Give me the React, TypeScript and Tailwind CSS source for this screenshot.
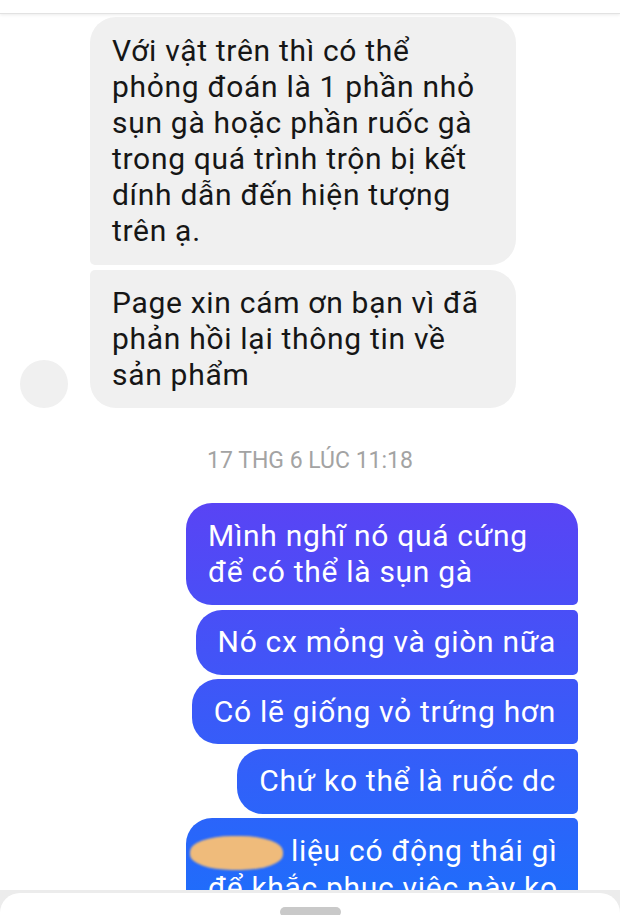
import React from "react";

const font = { fontFamily: "Roboto, 'Noto Sans', sans-serif" };

const blue =
  "bg-[linear-gradient(180deg,#6839f3_400px,#1f6dfb_900px)] bg-fixed text-white";

const bubbleText = "text-[30px] leading-[36px] tracking-[0.7px] whitespace-nowrap";

const incoming = [
  {
    lines: [
      "Với vật trên thì có thể",
      "phỏng đoán là 1 phần nhỏ",
      "sụn gà hoặc phần ruốc gà",
      "trong quá trình trộn bị kết",
      "dính dẫn đến hiện tượng",
      "trên ạ.",
    ],
    corners: "rounded-bl-[5px] py-[16px]",
  },
  {
    lines: ["Page xin cám ơn bạn vì đã", "phản hồi lại thông tin về", "sản phẩm"],
    corners: "rounded-tl-[5px] py-[15px]",
  },
];

const outgoing = [
  { lines: ["Mình nghĩ nó quá cứng", "để có thể là sụn gà"], wide: true, corners: "rounded-br-[5px] py-[15px]" },
  { lines: ["Nó cx mỏng và giòn nữa"], corners: "rounded-tr-[5px] rounded-br-[5px] py-[14.5px]" },
  { lines: ["Có lẽ giống vỏ trứng hơn"], corners: "rounded-tr-[5px] rounded-br-[5px] py-[14.5px]" },
  { lines: ["Chứ ko thể là ruốc dc"], corners: "rounded-tr-[5px] rounded-br-[5px] py-[14.5px]" },
];

export default function App() {
  return (
    <div
      className="h-[915px] w-[620px] overflow-hidden bg-white flex flex-col"
      style={font}
    >
      {/* top bar, mostly scrolled away */}
      <div className="h-[14px] shrink-0 border-b border-[#e2e2e2] shadow-[0_1px_3px_rgba(0,0,0,0.08)] bg-white" />

      <div className="flex-1 overflow-hidden pt-[3px]">
        {/* incoming */}
        <div className="flex items-end gap-[22px] pl-[20px]">
          <div className="w-[48px] h-[48px] rounded-full bg-[#f0f0f0] shrink-0" />
          <div className="flex flex-col gap-[5px]">
            {incoming.map((m, i) => (
              <div
                key={i}
                className={`w-[426px] rounded-[26px] ${m.corners} bg-[#f0f0f0] px-[22px] text-[#161616] ${bubbleText}`}
              >
                {m.lines.map((l, j) => (
                  <div key={j}>{l}</div>
                ))}
              </div>
            ))}
          </div>
        </div>

        <p className="mt-[38px] mb-[28px] text-center text-[23px] leading-[29px] text-[#a3a3a3]">
          17 THG 6 LÚC 11:18
        </p>

        {/* outgoing */}
        <div className="flex flex-col items-end gap-[4.5px] pr-[42px]">
          {outgoing.map((m, i) => (
            <div
              key={i}
              className={`${blue} ${m.wide ? "w-[392px]" : "w-fit"} rounded-[26px] ${m.corners} px-[22px] ${bubbleText}`}
            >
              {m.lines.map((l, j) => (
                <div key={j}>{l}</div>
              ))}
            </div>
          ))}
          <div
            className={`${blue} w-[392px] rounded-[26px] rounded-tr-[5px] px-[22px] py-[14.5px] ${bubbleText}`}
          >
            <div>
              <span className="inline-block align-middle -ml-[18px] mr-[8px] w-[93px] h-[34px] rounded-[45%] bg-[#efbb7b] blur-[1px]" />
              liệu có động thái gì
            </div>
            <div>để khắc phục việc này ko</div>
          </div>
        </div>
      </div>

      {/* bottom sheet handle */}
      <div className="h-[25px] shrink-0 bg-[#ececec] pt-[3px]">
        <div className="h-full rounded-t-[20px] bg-white flex justify-center pt-[14px]">
          <div className="w-[61px] h-[10px] rounded-full bg-[#c9c9c9]" />
        </div>
      </div>
    </div>
  );
}
